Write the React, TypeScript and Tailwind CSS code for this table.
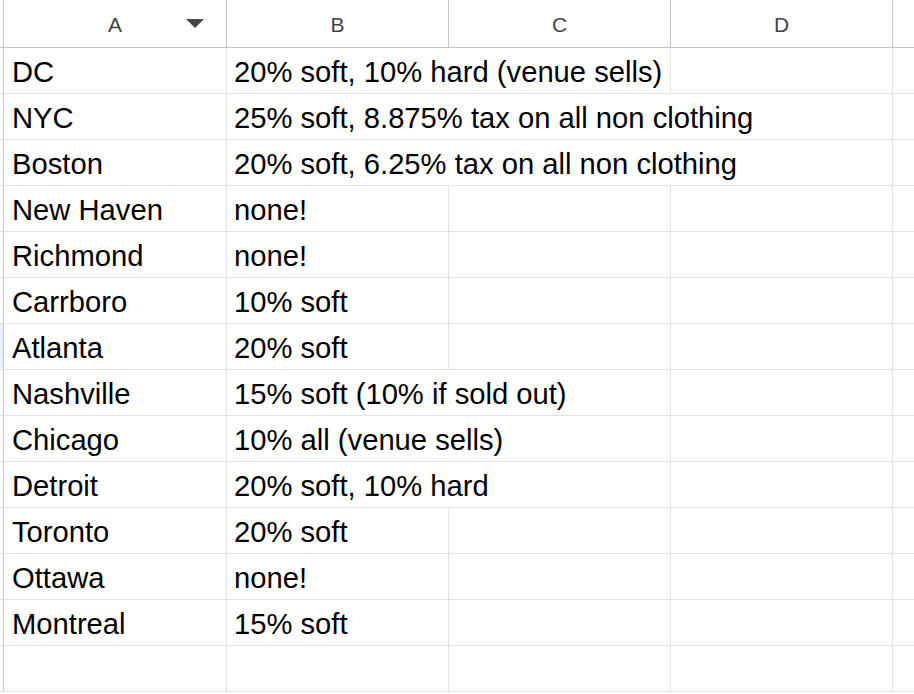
const columns = ["A", "B", "C", "D"];

// span = how many columns the B text runs across (B, C, D)
const rows: { city: string; terms: string; span: number }[] = [
  { city: "DC", terms: "20% soft, 10% hard (venue sells)", span: 2 },
  { city: "NYC", terms: "25% soft, 8.875% tax on all non clothing", span: 3 },
  { city: "Boston", terms: "20% soft, 6.25% tax on all non clothing", span: 3 },
  { city: "New Haven", terms: "none!", span: 1 },
  { city: "Richmond", terms: "none!", span: 1 },
  { city: "Carrboro", terms: "10% soft", span: 1 },
  { city: "Atlanta", terms: "20% soft", span: 1 },
  { city: "Nashville", terms: "15% soft (10% if sold out)", span: 2 },
  { city: "Chicago", terms: "10% all (venue sells)", span: 2 },
  { city: "Detroit", terms: "20% soft, 10% hard", span: 2 },
  { city: "Toronto", terms: "20% soft", span: 1 },
  { city: "Ottawa", terms: "none!", span: 1 },
  { city: "Montreal", terms: "15% soft", span: 1 },
  { city: "", terms: "", span: 1 },
];

const colWidths = ["w-[223px]", "w-[222px]", "w-[222px]", "w-[222px]"];

function SortCaret() {
  return (
    <svg viewBox="0 0 18 9" className="h-[9px] w-[18px]" aria-hidden="true">
      <path d="M0 0h18L9 9Z" fill="#444" />
    </svg>
  );
}

export default function App() {
  return (
    <div
      className="h-[694px] w-[914px] overflow-hidden bg-white text-black"
      style={{ fontFamily: '"Liberation Sans", Arial, sans-serif' }}
    >
      {/* column headers */}
      <div className="flex h-[48px] border-b border-[#c4c4c4]">
        <div className="w-[4px] shrink-0 border-r border-[#c4c4c4]" />
        {columns.map((col, i) => (
          <div
            key={col}
            className={`relative flex shrink-0 items-center justify-center border-r border-[#c4c4c4] pt-[2px] text-[21px] text-[#444] ${colWidths[i]}`}
          >
            {col}
            {i === 0 && (
              <span className="absolute left-[182px] top-[19px]">
                <SortCaret />
              </span>
            )}
          </div>
        ))}
        <div className="flex-1" />
      </div>

      {/* rows */}
      {rows.map((row, r) => (
        <div key={r} className="flex h-[46px] border-b border-[#e2e2e2]">
          <div
            className={`w-[4px] shrink-0 border-r border-[#c4c4c4] ${r === 6 ? "bg-[#e8f0fe]" : ""}`}
          />
          <div className="flex w-[223px] shrink-0 items-center border-r border-[#e2e2e2] pl-[8px] pt-[5px] text-[29.2px]">
            {row.city}
          </div>
          <div
            className={`relative w-[222px] shrink-0 ${row.span > 1 ? "" : "border-r border-[#e2e2e2]"}`}
          >
            <span className="absolute left-[7px] top-0 flex h-full items-center whitespace-nowrap pt-[5px] text-[29.2px]">
              {row.terms}
            </span>
          </div>
          <div
            className={`w-[222px] shrink-0 ${row.span > 2 ? "" : "border-r border-[#e2e2e2]"}`}
          />
          <div className="w-[222px] shrink-0 border-r border-[#e2e2e2]" />
          <div className="flex-1" />
        </div>
      ))}
    </div>
  );
}
